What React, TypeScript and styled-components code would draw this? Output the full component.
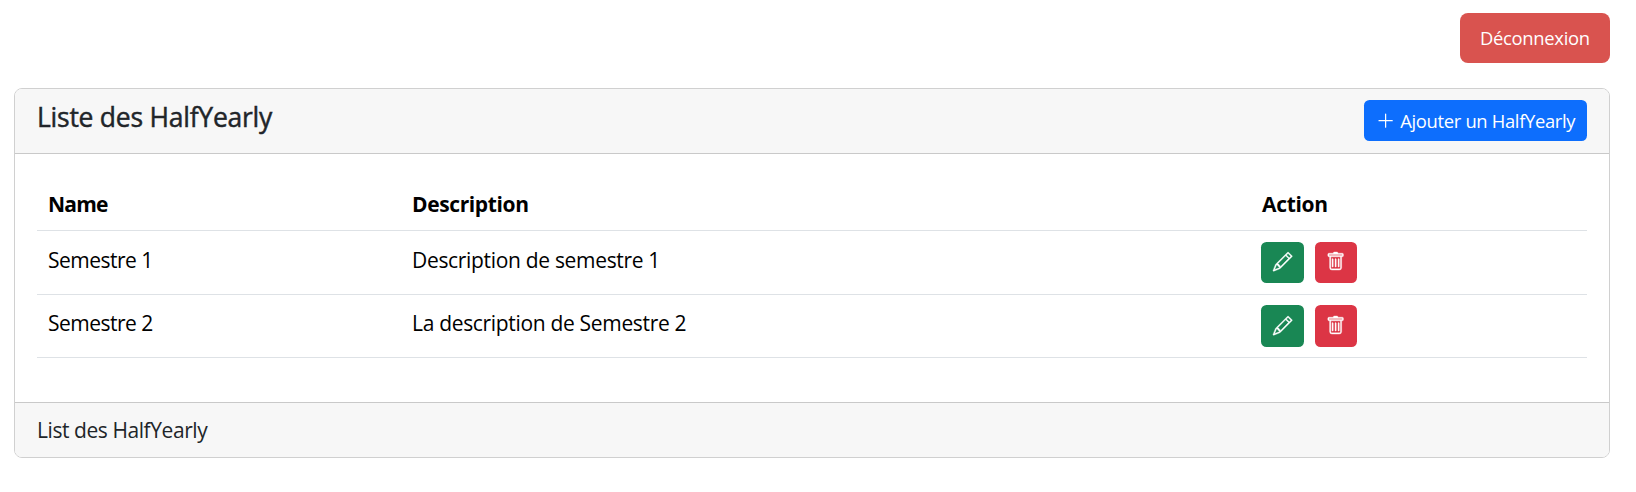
import React from "react";
import styled, { createGlobalStyle } from "styled-components";
import { BsPencil, BsPlusLg, BsTrash } from "react-icons/bs";

const GlobalStyle = createGlobalStyle`
  *, *::before, *::after { box-sizing: border-box; }
  body {
    margin: 0;
    background: #fff;
    color: #212529;
    font-family: "Segoe UI", "Open Sans", "Noto Sans", sans-serif;
    font-size: 21px;
    line-height: 33px;
  }
`;

const Page = styled.div`
  padding: 13px 26px 0 14px;
`;

const Label = styled.span<{ $spacing?: number }>`
  letter-spacing: ${({ $spacing = 0 }) => $spacing}px;
  white-space: nowrap;
`;

const TopBar = styled.header`
  display: flex;
  justify-content: flex-end;
  margin-bottom: 25px;
`;

const Button = styled.button`
  display: inline-flex;
  align-items: center;
  border: 0;
  color: #fff;
  font-family: inherit;
  font-size: 18.4px;
  line-height: 29px;
  padding: 0;
`;

const LogoutButton = styled(Button)`
  width: 150px;
  height: 50px;
  padding: 0 0 2px 20px;
  border-radius: 8px;
  background: #d9534f;
`;

const AddButton = styled(Button)`
  width: 223px;
  height: 41px;
  padding: 0 0 0 12px;
  gap: 5px;
  border-radius: 5.5px;
  background: #0d6efd;
`;

const IconButton = styled(Button)<{ $tone: "edit" | "remove" }>`
  width: ${({ $tone }) => ($tone === "edit" ? 43 : 42)}px;
  height: 100%;
  justify-content: center;
  border-radius: 5.5px;
  background: ${({ $tone }) => ($tone === "edit" ? "#198754" : "#dc3545")};

  svg {
    width: 19.25px;
    height: 19.25px;
    margin-top: -1.5px;
    stroke: currentColor;
    stroke-width: 0.3px;
    overflow: visible;
  }
`;

const Card = styled.section`
  height: 370px;
  border: 1px solid #d0d0d0;
  border-radius: 8px;
  overflow: hidden;
`;

const CardHeader = styled.div`
  display: flex;
  justify-content: space-between;
  height: 65px;
  padding: 11px 22px 0;
  background: #f7f7f7;
  border-bottom: 1px solid #c9c9c9;
`;

const Title = styled.h5`
  margin: 1px 0 0;
  font-size: 26.5px;
  font-weight: 500;
  line-height: 33px;
  -webkit-text-stroke: 0.45px currentColor;
`;

const CardBody = styled.div`
  padding: 22px 22px 44px;
`;

const CardFooter = styled.div`
  height: 55px;
  padding: 11px 22px 10px;
  background: #f7f7f7;
  border-top: 1px solid #c9c9c9;
`;

const Table = styled.table`
  width: 100%;
  table-layout: fixed;
  border-spacing: 0;
  color: #000;
`;

const HeadCell = styled.th<{ $width?: number }>`
  width: ${({ $width }) => ($width ? `${$width}px` : "auto")};
  height: 55px;
  padding: 12px 11px 9px;
  border-bottom: 1px solid #dee2e6;
  font-weight: 700;
  text-align: left;
`;

const Cell = styled.td<{ $height: number }>`
  height: ${({ $height }) => $height}px;
  padding: ${({ $height }) => $height - 53}px 11px 0;
  border-bottom: 1px solid #dee2e6;
  vertical-align: top;
`;

const CellText = styled.div`
  margin-top: 2px;
`;

const Actions = styled.div<{ $height: number }>`
  display: flex;
  gap: 11px;
  height: ${({ $height }) => $height}px;
  margin-left: -1px;
`;

const rows = [
  { name: "Semestre 1", description: "Description de semestre 1", height: 64, button: 41 },
  { name: "Semestre 2", description: "La description de Semestre 2", height: 63, button: 42 },
];

export default function App() {
  return (
    <>
      <GlobalStyle />
      <Page>
        <TopBar>
          <LogoutButton><Label $spacing={-0.3}>Déconnexion</Label></LogoutButton>
        </TopBar>
        <Card>
          <CardHeader>
            <Title><Label $spacing={-0.25}>Liste des HalfYearly</Label></Title>
            <AddButton>
              <BsPlusLg size={19.25} />
              <Label $spacing={-0.33}>Ajouter un HalfYearly</Label>
            </AddButton>
          </CardHeader>
          <CardBody>
            <Table>
              <thead>
                <tr>
                  <HeadCell $width={364}><Label $spacing={-0.8}>Name</Label></HeadCell>
                  <HeadCell $width={850}><Label $spacing={-0.38}>Description</Label></HeadCell>
                  <HeadCell><Label $spacing={-0.3}>Action</Label></HeadCell>
                </tr>
              </thead>
              <tbody>
                {rows.map((row) => (
                  <tr key={row.name}>
                    <Cell $height={row.height}><CellText><Label $spacing={-0.5}>{row.name}</Label></CellText></Cell>
                    <Cell $height={row.height}><CellText><Label $spacing={-0.32}>{row.description}</Label></CellText></Cell>
                    <Cell $height={row.height}>
                      <Actions $height={row.button}>
                        <IconButton $tone="edit" aria-label="Modifier"><BsPencil /></IconButton>
                        <IconButton $tone="remove" aria-label="Supprimer"><BsTrash /></IconButton>
                      </Actions>
                    </Cell>
                  </tr>
                ))}
              </tbody>
            </Table>
          </CardBody>
          <CardFooter><Label $spacing={-0.43}>List des HalfYearly</Label></CardFooter>
        </Card>
      </Page>
    </>
  );
}
